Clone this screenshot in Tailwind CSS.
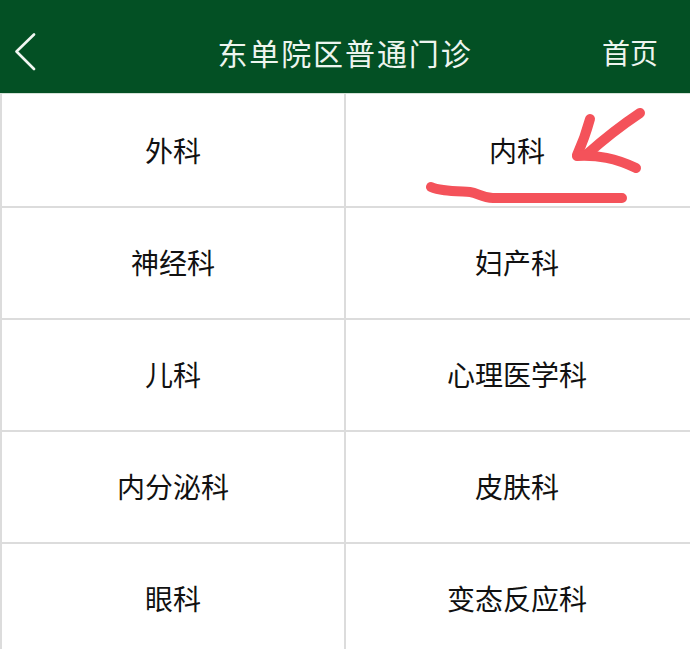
<!DOCTYPE html>
<html lang="zh-CN">
<head>
    <meta charset="UTF-8">
    <meta name="viewport" content="width=device-width, initial-scale=1.0">
    <title>东单院区普通门诊</title>
    <script src="https://cdn.jsdelivr.net/npm/@tailwindcss/browser@4"></script>
</head>
<body class="bg-white font-['Noto_Sans_CJK_SC',sans-serif]">
    <div class="relative w-[690px] h-[649px] overflow-hidden">
        <!-- Header -->
        <header class="h-[94px] bg-[#035024] text-[#eef5ef] grid grid-cols-[1fr_auto_1fr] items-center pt-[11px] pl-[14px] pr-[32px] border-b border-[#d5e2d8]">
            <svg width="22" height="38" viewBox="0 0 22 38" fill="none" stroke="#f2f7f3" stroke-width="2.6" stroke-linecap="round" stroke-linejoin="round"><path d="M20 1.5 L2.5 18.5 L20 36"/></svg>
            <h1 class="text-[30px] tracking-[1.9px] font-normal pl-[18px]">东单院区普通门诊</h1>
            <a class="text-[28px] font-normal text-right">首页</a>
        </header>

        <!-- Departments -->
        <div class="grid grid-cols-[346px_344px] grid-rows-[114px_112px_112px_112px_112px] text-[28px] leading-none text-[#111] font-normal">
            <div class="border-r-2 border-b-2 border-[#dcdcdc] flex items-center justify-center pl-[2px] pt-[2px] pb-[2px]">外科</div>
            <div class="border-b-2 border-[#dcdcdc] flex items-center justify-center pr-[2px] pt-[2px] pb-[2px]">内科</div>
            <div class="border-r-2 border-b-2 border-[#dcdcdc] flex items-center justify-center pl-[2px] pb-[2px]">神经科</div>
            <div class="border-b-2 border-[#dcdcdc] flex items-center justify-center pr-[2px] pb-[2px]">妇产科</div>
            <div class="border-r-2 border-b-2 border-[#dcdcdc] flex items-center justify-center pl-[2px] pb-[2px]">儿科</div>
            <div class="border-b-2 border-[#dcdcdc] flex items-center justify-center pr-[2px] pb-[2px]">心理医学科</div>
            <div class="border-r-2 border-b-2 border-[#dcdcdc] flex items-center justify-center pl-[2px] pb-[2px]">内分泌科</div>
            <div class="border-b-2 border-[#dcdcdc] flex items-center justify-center pr-[2px] pb-[2px]">皮肤科</div>
            <div class="border-r-2 border-b-2 border-[#dcdcdc] flex items-center justify-center pl-[2px] pb-[2px]">眼科</div>
            <div class="border-b-2 border-[#dcdcdc] flex items-center justify-center pr-[2px] pb-[2px]">变态反应科</div>
        </div>

        <!-- Left edge line -->
        <div class="absolute left-0 top-[94px] bottom-0 w-[2px] bg-[#dcdcdc]"></div>

        <!-- Red marker scribble over the 内科 cell -->
        <svg class="absolute left-0 top-0 pointer-events-none" width="690" height="649" viewBox="0 0 690 649" fill="none" stroke="#f4525a" stroke-width="10" stroke-linecap="round" stroke-linejoin="round">
            <path d="M590 119 C587 130 583 142 577 155"/>
            <path d="M640 113 C622 125 604 139 586 155"/>
            <path d="M577 156 C598 155 615 158 636 168"/>
            <path d="M431 187 C440 191 452 191 470 192 C478 193 482 198 493 198 L622 198"/>
        </svg>
    </div>
</body>
</html>
